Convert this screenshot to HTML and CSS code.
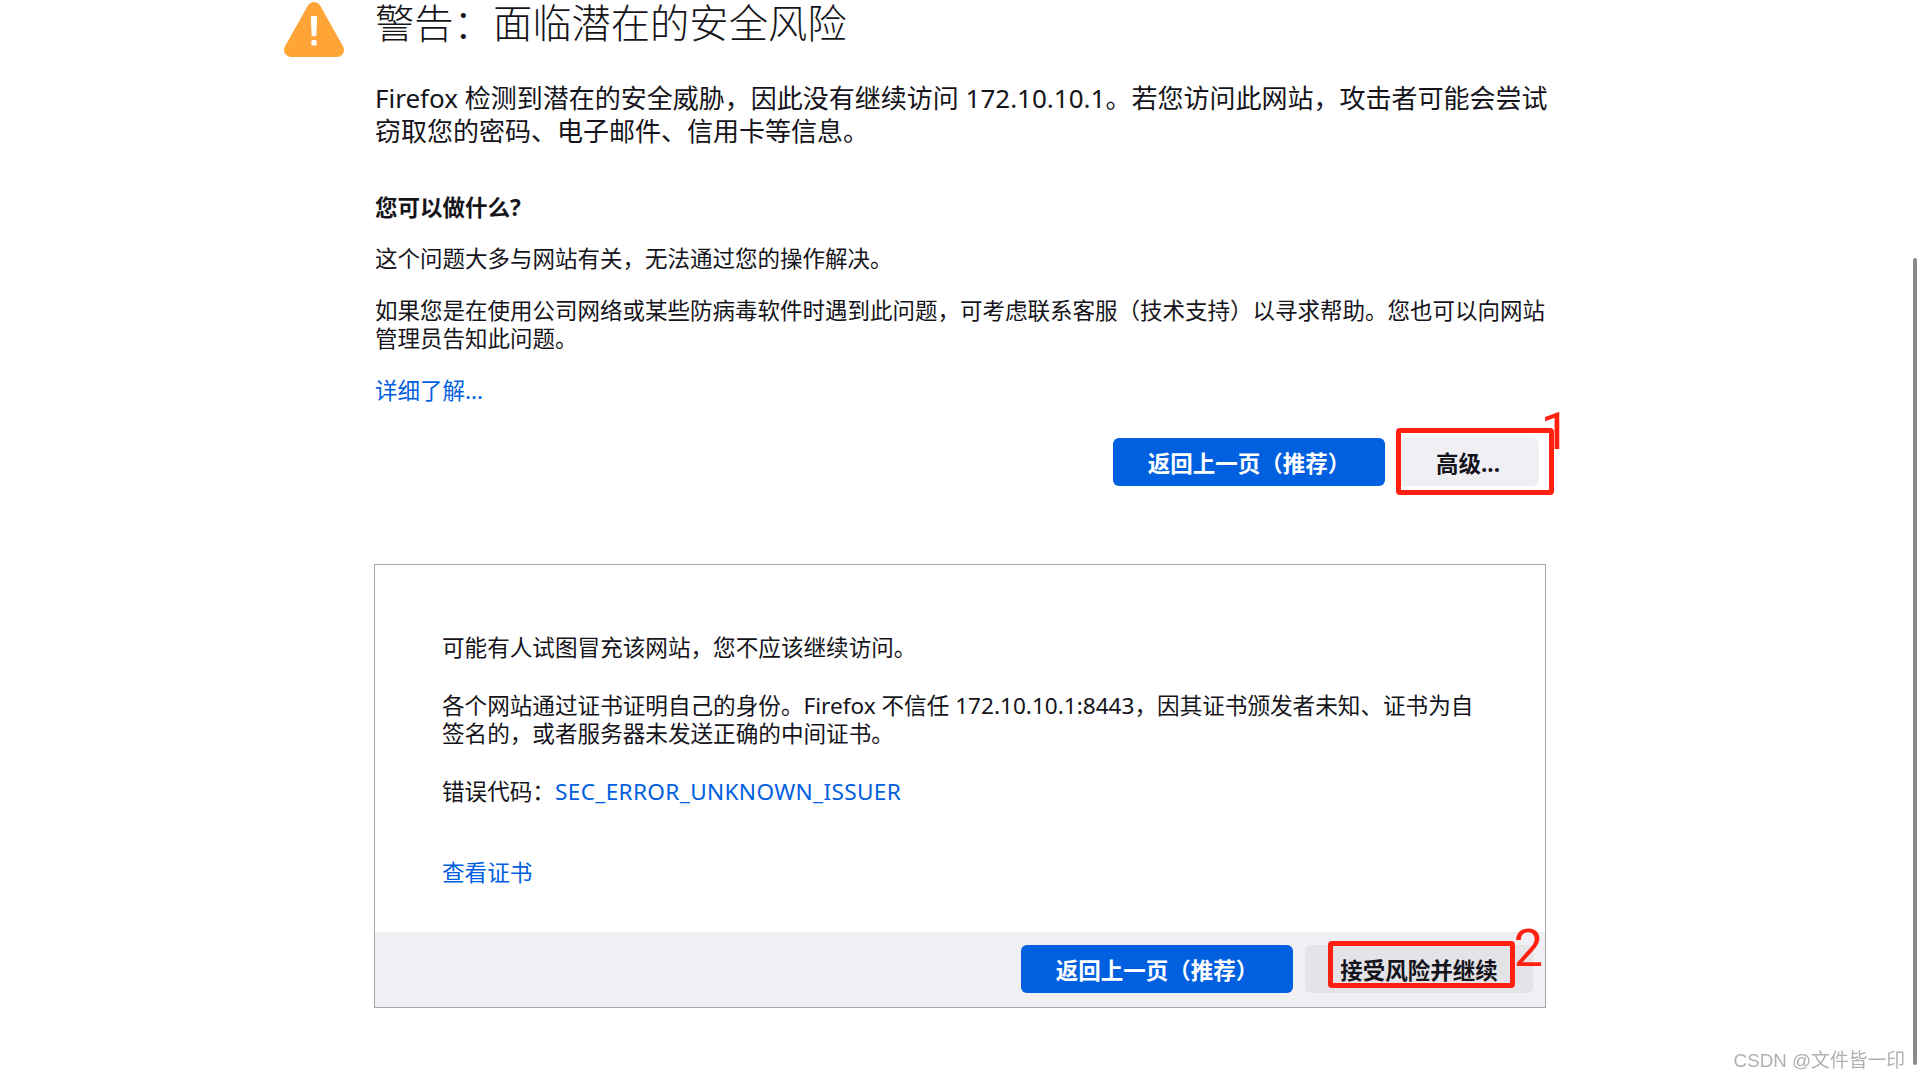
FILE: index.html
```html
<!DOCTYPE html>
<html lang="zh-CN">
<head>
<meta charset="utf-8">
<title>警告：面临潜在的安全风险</title>
<link rel="stylesheet" href="styles.css">
</head>
<body>
<main class="page">
  <header class="title-row">
    <svg class="warn-icon" viewBox="0 0 60 58" aria-hidden="true">
      <polygon fill="#ffa436" stroke="#ffa436" stroke-width="14" stroke-linejoin="round" points="30,9 7,50 53,50"/>
      <path fill="#fff" d="M28 16h4c.8 0 1.200.6 1.200 1.400l-.8 17.500c0 .8-.6 1.300-1.300 1.300h-2.200c-.7 0-1.300-.5-1.300-1.300l-.8-17.500c0-.8.400-1.400 1.200-1.400z"/>
      <rect fill="#fff" x="27.300" y="40" width="5.400" height="5.400" rx="1.500"/>
    </svg>
    <h1 class="title">警告：面临潜在的安全风险</h1>
  </header>
  <p class="intro">Firefox 检测到潜在的安全威胁，因此没有继续访问 172.10.10.1。若您访问此网站，攻击者可能会尝试窃取您的密码、电子邮件、信用卡等信息。</p>
  <h2 class="subhead">您可以做什么?</h2>
  <p class="text first">这个问题大多与网站有关，无法通过您的操作解决。</p>
  <p class="text second">如果您是在使用公司网络或某些防病毒软件时遇到此问题，可考虑联系客服（技术支持）以寻求帮助。您也可以向网站管理员告知此问题。</p>
  <p class="text second"><a class="link" href="#">详细了解...</a></p>
  <div class="actions">
    <button class="btn primary">返回上一页（推荐）</button>
    <button class="btn secondary advanced">高级...
      <span class="mark mark-one"></span><span class="num num-one">1</span>
    </button>
  </div>
  <section class="panel">
    <div class="panel-body">
      <p class="text">可能有人试图冒充该网站，您不应该继续访问。</p>
      <p class="text gap">各个网站通过证书证明自己的身份。Firefox 不信任 172.10.10.1:8443，因其证书颁发者未知、证书为自签名的，或者服务器未发送正确的中间证书。</p>
      <p class="text gap">错误代码：<a class="link code" href="#">SEC_ERROR_UNKNOWN_ISSUER</a></p>
      <p class="text cert"><a class="link" href="#">查看证书</a></p>
    </div>
    <div class="panel-foot">
      <button class="btn primary">返回上一页（推荐）</button>
      <button class="btn secondary accept">接受风险并继续
        <span class="mark mark-two"></span><span class="num num-two">2</span>
      </button>
    </div>
  </section>
</main>
<div class="scrollbar"></div>
<div class="watermark">CSDN @文件皆一印</div>
</body>
</html>
```
FILE: styles.css
```css
* { box-sizing: border-box; }
html, body { margin: 0; height: 100%; overflow: hidden; background: #fff; }
body {
  font-family: "Noto Sans", "Noto Sans CJK SC", sans-serif;
  color: #15141a;
  font-size: 22.5px;
  line-height: 28px;
}
.page { width: 1174px; margin-left: 375px; }
.title-row { position: relative; height: 50px; }
.warn-icon { position: absolute; left: -91px; top: 0; width: 60px; height: 58px; }
.title { margin: 0; font-size: 39.3px; line-height: 47px; font-weight: 300; }
.intro { margin: 32px 0 0; font-size: 26px; line-height: 33px; }
.subhead { margin: 46px 0 0; font-size: 22.5px; line-height: 28px; font-weight: 700; }
.text { margin: 0; }
.first { margin-top: 23px; }
.second { margin-top: 24px; }
.gap { margin-top: 30px; }
.cert { margin-top: 53px; }
.link { color: #0060df; text-decoration: none; }
.code { letter-spacing: .35px; }
.actions { display: flex; justify-content: flex-end; gap: 12px; margin-top: 33px; padding-right: 10px; }
.btn {
  position: relative;
  height: 48px;
  border: 0;
  border-radius: 6px;
  font: 700 22.5px/48px "Noto Sans", "Noto Sans CJK SC", sans-serif;
  padding: 2px 0 0;
  color: #15141a;
}
.primary { width: 272px; background: #0060df; color: #fff; }
.secondary { background: #f0f0f4; }
.advanced { width: 142px; }
.panel { margin: 78px 3px 0 -1px; height: 444px; border: 1px solid #a8a8a8; display: flex; flex-direction: column; }
.panel-body { flex: 1; padding: 69px 66px 0 67px; font-size: 22.6px; }
.panel-foot { height: 75px; background: #f0f0f4; display: flex; justify-content: flex-end; gap: 12px; padding: 13px 12px 0; }
.accept { width: 228px; background: #e3e3e8; }
.mark { position: absolute; border: 5px solid #ff2012; border-radius: 4px; }
.mark-one { left: -1px; top: -10px; width: 158px; height: 67px; }
.mark-two { left: 23px; top: -4px; width: 187px; height: 47px; }
.num { position: absolute; color: #ff2012; font: 400 52px/52px "Roboto", sans-serif; }
.num-one { right: -31px; top: -32px; }
.num-two { right: -10px; top: -22px; }
.scrollbar { position: fixed; right: 3px; top: 258px; bottom: 15px; width: 4px; background: #8a8a8a; border-radius: 2px; }
.watermark { position: fixed; right: 15px; bottom: 6px; font: 18.800px/26px "Liberation Sans", "Noto Sans CJK SC", sans-serif; color: #b0b0b0; }
```
